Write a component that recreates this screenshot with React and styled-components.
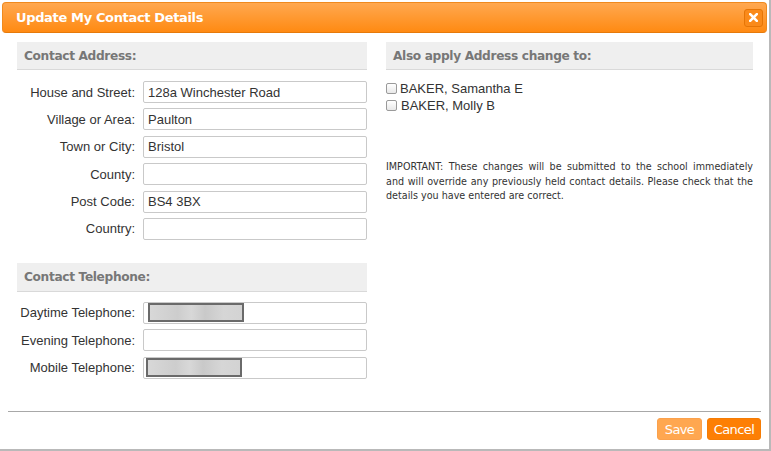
import React from "react";
import styled, { createGlobalStyle } from "styled-components";

const Global = createGlobalStyle`
  html, body { margin: 0; padding: 0; background: #fff; }
  body { font-family: "Liberation Sans", Arial, sans-serif; font-size: 13px; color: #333; }
  * { box-sizing: border-box; }
`;

const Dialog = styled.div`
  width: 771px;
  height: 451px;
  background: #fff;
  border-right: 2px solid #b9b9b9;
  border-bottom: 2px solid #b9b9b9;
  display: flex;
  flex-direction: column;
`;

const TitleBar = styled.div`
  margin: 2px 2px 0 2px;
  height: 31px;
  border-radius: 4px;
  border: 1px solid #f08a1e;
  border-bottom-color: #e67a0a;
  background: linear-gradient(#ffa850, #ff8a12);
  display: flex;
  align-items: center;
  justify-content: space-between;
  padding: 0 3px 0 13px;
`;

const Title = styled.div`
  color: #fff;
  font-weight: bold;
  font-size: 13px;
  font-family: "DejaVu Sans", Verdana, sans-serif;
  letter-spacing: -0.35px;
`;

const CloseBtn = styled.button`
  width: 19px;
  height: 18px;
  border-radius: 3px;
  border: 1px solid #e67506;
  background: #fa8a1a;
  color: #fff;
  padding: 0;
  display: flex;
  align-items: center;
  justify-content: center;
`;

const Body = styled.div`
  flex: 1;
  display: grid;
  grid-template-columns: 350px 367px;
  column-gap: 19px;
  padding: 9px 0 0 17px;
`;

const Column = styled.div`
  display: flex;
  flex-direction: column;
`;

const SectionHeader = styled.div`
  height: ${(p) => p.$h || 28}px;
  background: #efefef;
  border-bottom: 1px solid #d9d9d9;
  color: #777;
  font-weight: bold;
  font-family: "DejaVu Sans", Verdana, sans-serif;
  font-size: 12.2px;
  letter-spacing: -0.35px;
  display: flex;
  align-items: center;
  padding-left: 7px;
  margin-top: ${(p) => p.$mt || 0}px;
`;

const FormGrid = styled.div`
  display: grid;
  grid-template-columns: 118px 224px;
  column-gap: 8px;
  row-gap: 5.4px;
  margin-top: ${(p) => p.$mt || 11}px;
`;

const Label = styled.label`
  text-align: right;
  align-self: center;
  color: #333;
  font-size: 13px;
  white-space: nowrap;
`;

const Input = styled.div`
  height: 22px;
  border: 1px solid #c9c9c9;
  border-radius: 2px;
  padding: 0 4px;
  display: flex;
  align-items: center;
  color: #333;
  font-size: 13px;
`;

const Blurred = styled.span`
  display: block;
  width: 96px;
  height: 19px;
  margin-left: ${(p) => p.$ml || 0}px;
  border: 2px solid #6a6a6a;
  background: linear-gradient(90deg, #d8d8d8, #cdcdcd 30%, #d8d8d8 45%, #c9c9c9 60%, #d6d6d6 80%, #d3d3d3);
`;

const CheckList = styled.div`
  display: flex;
  flex-direction: column;
  margin-top: 11px;
  gap: 2px;
`;

const CheckRow = styled.label`
  display: flex;
  align-items: center;
  gap: ${(p) => p.$gap || 3}px;
  font-size: 13px;
  color: #333;
  height: 15px;
`;

const Box = styled.span`
  width: 11px;
  height: 11px;
  border: 1px solid #9a9a9a;
  border-radius: 2px;
  background: linear-gradient(#fff, #e8e8e8);
  display: inline-block;
`;

const Notice = styled.p`
  margin: 47px 0 0 0;
  font-family: "DejaVu Sans", Verdana, sans-serif;
  font-size: 9.6px;
  line-height: 14.5px;
  text-align: justify;
  color: #333;
`;

const Footer = styled.div`
  margin: 0 8px 0 8px;
  border-top: 1px solid #a8a8a8;
  display: flex;
  justify-content: flex-end;
  gap: 5px;
  padding: 6px 0 9px 0;
`;

const Button = styled.button`
  height: 22px;
  width: ${(p) => p.$w}px;
  padding: 0;
  border-radius: 3px;
  border: 1px solid ${(p) => (p.$light ? "#fba14c" : "#f57c05")};
  background: ${(p) => (p.$light ? "#ffa750" : "#fd7f04")};
  color: #fff;
  font-size: 13px;
  font-family: "DejaVu Sans", Verdana, sans-serif;
  letter-spacing: -0.6px;
`;

const addressRows = [
  ["House and Street:", "128a Winchester Road"],
  ["Village or Area:", "Paulton"],
  ["Town or City:", "Bristol"],
  ["County:", ""],
  ["Post Code:", "BS4 3BX"],
  ["Country:", ""],
];

export default function App() {
  return (
    <>
      <Global />
      <Dialog>
        <TitleBar>
          <Title>Update My Contact Details</Title>
          <CloseBtn aria-label="close">
            <svg width="9" height="9" viewBox="0 0 9 9">
              <path d="M1.2 1.2 L7.8 7.8 M7.8 1.2 L1.2 7.8" stroke="#fff" strokeWidth="2.6" strokeLinecap="square" />
            </svg>
          </CloseBtn>
        </TitleBar>
        <Body>
          <Column>
            <SectionHeader>Contact Address:</SectionHeader>
            <FormGrid>
              {addressRows.map(([l, v]) => (
                <React.Fragment key={l}>
                  <Label>{l}</Label>
                  <Input>{v}</Input>
                </React.Fragment>
              ))}
            </FormGrid>
            <SectionHeader $mt={23} $h={29}>Contact Telephone:</SectionHeader>
            <FormGrid $mt={10}>
              <Label>Daytime Telephone:</Label>
              <Input><Blurred /></Input>
              <Label>Evening Telephone:</Label>
              <Input />
              <Label>Mobile Telephone:</Label>
              <Input><Blurred $ml={-2} /></Input>
            </FormGrid>
          </Column>
          <Column>
            <SectionHeader>Also apply Address change to:</SectionHeader>
            <CheckList>
              <CheckRow><Box />BAKER, Samantha E</CheckRow>
              <CheckRow $gap={4}><Box />BAKER, Molly B</CheckRow>
            </CheckList>
            <Notice>
              IMPORTANT: These changes will be submitted to the school immediately and will override any previously held contact details. Please check that the details you have entered are correct.
            </Notice>
          </Column>
        </Body>
        <Footer>
          <Button $light $w={45}>Save</Button>
          <Button $w={54}>Cancel</Button>
        </Footer>
      </Dialog>
    </>
  );
}
